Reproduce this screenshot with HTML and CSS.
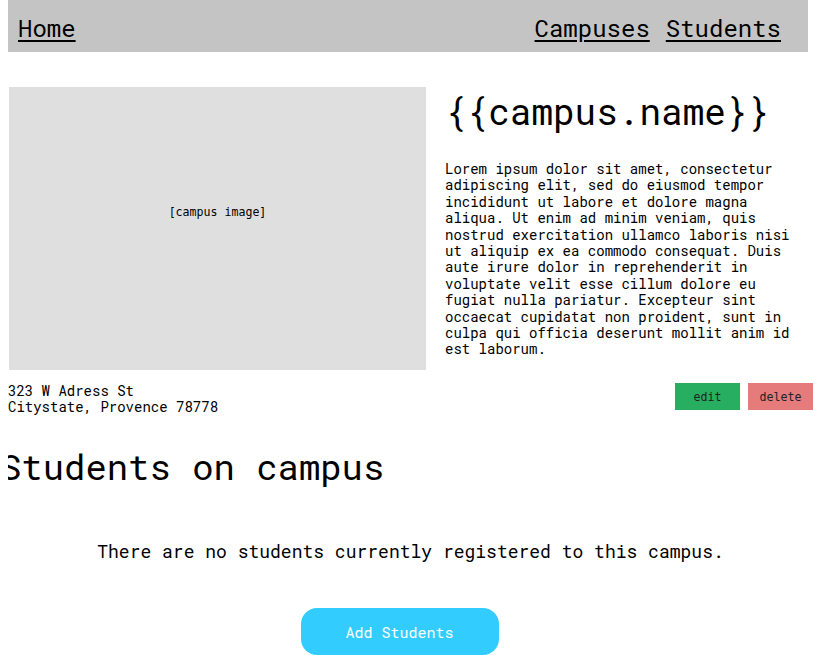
FILE: index.html
```html
<!DOCTYPE html>
<html>
<head>
<meta charset="utf-8">
<link rel="stylesheet" href="styles.css">
</head>
<body>
<nav class="nav">
  <a class="nav-link" href="#">Home</a>
  <div class="nav-right">
    <a class="nav-link" href="#">Campuses</a>
    <a class="nav-link" href="#">Students</a>
  </div>
</nav>
<main class="campus">
  <section class="top">
    <div class="image">[campus image]</div>
    <div class="info">
      <h1 class="title">{{campus.name}}</h1>
      <p class="desc">Lorem ipsum dolor sit amet, consectetur adipiscing elit, sed do eiusmod tempor incididunt ut labore et dolore magna aliqua. Ut enim ad minim veniam, quis nostrud exercitation ullamco laboris nisi ut aliquip ex ea commodo consequat. Duis aute irure dolor in reprehenderit in voluptate velit esse cillum dolore eu fugiat nulla pariatur. Excepteur sint occaecat cupidatat non proident, sunt in culpa qui officia deserunt mollit anim id est laborum.</p>
    </div>
  </section>
  <section class="meta">
    <div class="address">323 W Adress St<br>Citystate, Provence 78778</div>
    <div class="actions">
      <button class="btn btn-edit">edit</button>
      <button class="btn btn-delete">delete</button>
    </div>
  </section>
  <h2 class="students-title">Students on campus</h2>
  <p class="empty">There are no students currently registered to this campus.</p>
  <div class="add-wrap"><button class="add">Add Students</button></div>
</main>
</body>
</html>
```
FILE: styles.css
```css
body {
  margin: 0 0 0 8px;
  font-family: "Roboto Mono", "DejaVu Sans Mono", monospace;
  color: #000;
  background: #fff;
}
.nav {
  display: flex;
  justify-content: space-between;
  align-items: center;
  box-sizing: border-box;
  width: 800px;
  height: 52px;
  background: #c4c4c4;
  padding: 3px 27px 0 10px;
}
.nav-right {
  display: flex;
  gap: 16px;
}
.nav-link {
  font-size: 24px;
  color: #000;
  text-decoration: underline;
  text-underline-offset: 3px;
}
.top {
  display: flex;
  margin-top: 35px;
}
.image {
  box-sizing: border-box;
  width: 417px;
  height: 283px;
  margin-left: 1px;
  padding-bottom: 34px;
  background: #dfdfdf;
  display: flex;
  align-items: center;
  justify-content: center;
  font-family: "DejaVu Sans Mono", monospace;
  font-size: 11.6px;
}
.info {
  margin-left: 19px;
  flex: 1;
}
.title {
  margin: 0;
  font-size: 36px;
  font-weight: 400;
  line-height: 48px;
}
.desc {
  margin: 26px 0 0;
  font-size: 14px;
  line-height: 16.4px;
  width: 360px;
}
.meta {
  display: flex;
  justify-content: space-between;
  margin-top: 13px;
}
.address {
  font-size: 14px;
  line-height: 16px;
}
.actions {
  display: flex;
  gap: 8px;
}
.btn {
  width: 65px;
  height: 27px;
  border: none;
  font-family: "DejaVu Sans Mono", monospace;
  font-size: 11.6px;
  color: #222;
  padding: 0;
  flex-shrink: 0;
}
.btn-edit { background: #27ae60; }
.btn-delete { background: #e57b7b; }
.students-title {
  margin: 28px 0 0 -8px;
  font-size: 35.6px;
  font-weight: 400;
  line-height: 48px;
}
.empty {
  margin: 48px 0 0;
  text-align: center;
  font-size: 18px;
  line-height: 24px;
}
.add-wrap {
  display: flex;
  justify-content: center;
  margin-top: 45px;
  padding-right: 22px;
}
.add {
  width: 198px;
  height: 47px;
  border: none;
  border-radius: 16px;
  background: #32cdfe;
  color: #fff;
  font-family: "Roboto Mono", "DejaVu Sans Mono", monospace;
  font-size: 15px;
}
```
